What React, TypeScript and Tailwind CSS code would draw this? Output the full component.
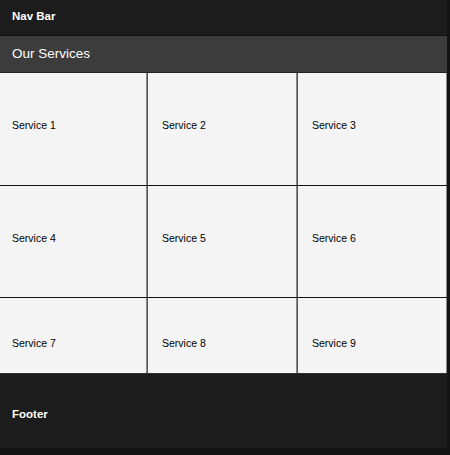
export default function App() {
  const rows = [
    { h: "h-[112px]", pt: "pt-[46px]", items: [1, 2, 3] },
    { h: "h-[111px]", pt: "pt-[46px]", items: [4, 5, 6] },
    { h: "h-[75px]", pt: "pt-[39px]", items: [7, 8, 9] },
  ];

  return (
    <div
      className="w-[450px] h-[455px] bg-[#141414] overflow-hidden"
      style={{ fontFamily: '"Liberation Sans", Arial, sans-serif' }}
    >
      <div className="w-[447px] flex flex-col">
        {/* Nav */}
        <div className="h-[36px] bg-[#1c1c1c] border-b border-[#0f0f0f] flex items-center px-3 pb-[1px]">
          <span className="text-white text-[11.5px] font-bold">Nav Bar</span>
        </div>

        {/* Section header */}
        <div className="h-[37px] bg-[#3c3c3c] border-b border-[#222] flex items-center px-3">
          <h2 className="text-white text-[13.5px]">Our Services</h2>
        </div>

        {/* Grid */}
        <div className="flex flex-col gap-px bg-[#111]">
          {rows.map((row) => (
            <div key={row.items[0]} className={`grid grid-cols-[147px_150px_150px] ${row.h}`}>
              {row.items.map((n, i) => (
                <div
                  key={n}
                  className={`bg-[#f4f4f4] border-r border-[#8a8a8a] ${
                    i === 0 ? "pl-3" : "border-l border-l-[#555] pl-[14px]"
                  } ${row.pt}`}
                >
                  <span className="block text-[10.5px] leading-[13px] text-black">Service {n}</span>
                </div>
              ))}
            </div>
          ))}
        </div>

        {/* Footer */}
        <div className="h-[75px] bg-[#1c1c1c] border-t border-[#333] px-3 pt-[33px]">
          <span className="block text-white text-[11.5px] leading-[14px] font-bold">Footer</span>
        </div>
      </div>
    </div>
  );
}
